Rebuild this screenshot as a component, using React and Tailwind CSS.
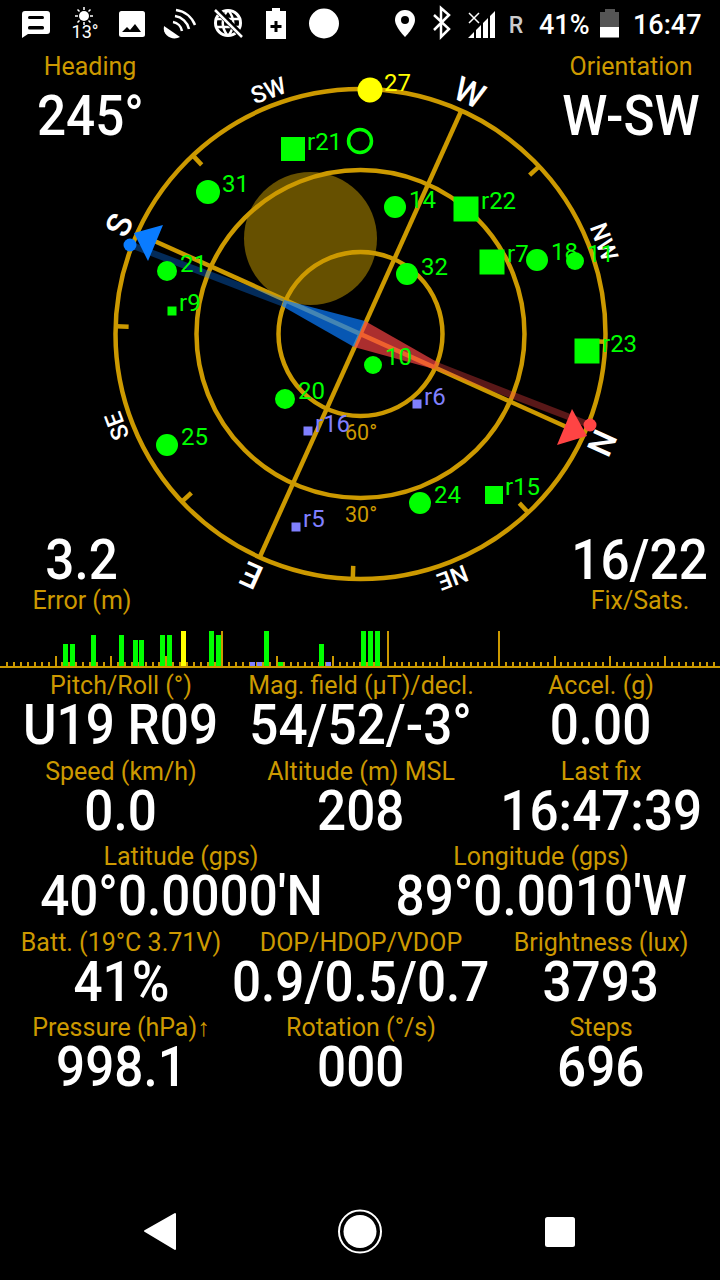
const GOLD = '#cc9900';
const GREEN = '#00ff00';
const PERI = '#8080ff';
const CX = 360.5;
const CY = 334;
const R = 245;

const polar = (az, r) => {
  const a = (az * Math.PI) / 180;
  return [CX + r * Math.sin(a), CY - r * Math.cos(a)];
};

const compassLabels = [
  ['N', 114.3, 265, 34],
  ['NE', 159.3, 260, 24],
  ['E', 204.3, 265, 34],
  ['SE', 249.3, 260, 24],
  ['S', 294.3, 265, 34],
  ['SW', 339.3, 260, 24],
  ['W', 24.3, 265, 34],
  ['NW', 69.3, 260, 24],
];

const azimuthTicks = [136.8, 181.8, 226.8, 271.8, 316.8, 1.8, 46.8, 91.8];
const axes = [114.3, 24.3];

// kind: c = circle, s = square, size is the diameter or the side
const sats = [
  ['27', 'c', 370, 90, 25, '#ffff00', 384, 91],
  ['r21', 's', 293, 149, 24, GREEN, 307, 150],
  ['31', 'c', 208, 192, 24, GREEN, 222, 192],
  ['14', 'c', 395, 207, 22, GREEN, 409, 208],
  ['r22', 's', 466, 209, 25, GREEN, 481, 209],
  ['32', 'c', 407, 274, 22, GREEN, 421, 275],
  ['r7', 's', 492, 262, 25, GREEN, 507, 262],
  ['18', 'c', 537, 260, 22, GREEN, 551, 260],
  ['11', 'c', 575, 261, 18, GREEN, 587, 262],
  ['21', 'c', 167, 271, 20, GREEN, 180, 272],
  ['r9', 's', 172, 311, 9, GREEN, 179, 311],
  ['r23', 's', 587, 351, 25, GREEN, 602, 352],
  ['10', 'c', 373, 365, 18, GREEN, 385, 365],
  ['20', 'c', 285, 399, 20, GREEN, 298, 399],
  ['r6', 's', 417, 404, 9, PERI, 424, 405],
  ['r16', 's', 308, 431, 9, PERI, 315, 432],
  ['25', 'c', 167, 445, 22, GREEN, 181, 445],
  ['24', 'c', 420, 503, 22, GREEN, 434, 503],
  ['r15', 's', 494, 495, 18, GREEN, 505, 495],
  ['r5', 's', 296, 527, 9, PERI, 303, 527],
];

const Compass = () => (
  <svg width="720" height="552" viewBox="0 48 720 552" className="block" style={{ fontFamily: 'Roboto, sans-serif' }}>
    <circle cx="310.5" cy="238.5" r="66.5" fill="#665000" />
    {[R, 164, 82].map((r) => (
      <circle key={r} cx={CX} cy={CY} r={r} fill="none" stroke={GOLD} strokeWidth="4.5" />
    ))}
    {axes.map((az) => {
      const [x1, y1] = polar(az, R);
      const [x2, y2] = polar(az + 180, R);
      return <line key={az} x1={x1} y1={y1} x2={x2} y2={y2} stroke={GOLD} strokeWidth="4.5" />;
    })}
    {azimuthTicks.map((az) => {
      const [x1, y1] = polar(az, R);
      const [x2, y2] = polar(az, R - 13);
      return <line key={az} x1={x1} y1={y1} x2={x2} y2={y2} stroke={GOLD} strokeWidth="4.5" />;
    })}
    {compassLabels.map(([text, az, r, size]) => {
      const [x, y] = polar(az, r);
      return (
        <text
          key={text}
          x={x}
          y={y}
          fill="#fff"
          fontSize={size}
          fontWeight="500"
          textAnchor="middle"
          dominantBaseline="central"
          transform={`rotate(${az} ${x} ${y})`}
        >
          {text}
        </text>
      );
    })}

    {/* needle */}
    <polygon points="365,321 354,347 282,306 284,300" fill="#0a7cff" fillOpacity="0.7" />
    <polygon points="284,299 281,306 130,248 132,242" fill="#0a7cff" fillOpacity="0.35" />
    <polygon points="365,321 354,347 434,369 437,362" fill="#ff4444" fillOpacity="0.67" />
    <polygon points="437,362 434,369 589,428 591,422" fill="#ff4444" fillOpacity="0.35" />
    <polygon points="134,233 163,225 148,261" fill="#0a7cff" />
    <circle cx="130" cy="245" r="6.5" fill="#0a7cff" />
    <polygon points="572,409 587,436 557,445" fill="#ff4444" />
    <circle cx="590" cy="425" r="6.5" fill="#ff4444" />

    <circle cx="360" cy="141" r="11.5" fill="none" stroke={GREEN} strokeWidth="3.5" />
    <text x="345" y="440" fill={GOLD} fontSize="21.5">60°</text>
    <text x="345" y="522" fill={GOLD} fontSize="21.5">30°</text>

    {sats.map(([id, kind, x, y, size, color, tx, ty]) => (
      <g key={id}>
        {kind === 'c' ? (
          <circle cx={x} cy={y} r={size / 2} fill={color} />
        ) : (
          <rect x={x - size / 2} y={y - size / 2} width={size} height={size} fill={color} />
        )}
        <text x={tx} y={ty} fill={color} fontSize="24">{id}</text>
      </g>
    ))}
  </svg>
);

const bars = [
  [63, 644, GREEN], [70, 644, GREEN], [91, 635, GREEN], [119, 635, GREEN], [133, 640, GREEN], [139, 640, GREEN],
  [160, 635, GREEN], [167, 635, GREEN], [181, 631, '#ffff00'], [209, 631, GREEN], [216, 635, GREEN],
  [250, 662, PERI], [257, 662, PERI], [264, 631, GREEN], [278, 662, GREEN], [319, 644, GREEN], [326, 662, PERI],
  [361, 631, GREEN], [368, 631, GREEN], [375, 631, GREEN],
];

const SignalChart = () => {
  const ticks = [];
  for (let i = 1; i <= 104; i++) {
    const x = Math.floor(i * 6.93 - 0.4);
    const major = i % 8 === 0;
    const tall = i === 32 || i === 56 || i === 72;
    ticks.push(<rect key={i} x={x} y={tall ? 631 : major ? 656 : 662} width="2" height={tall ? 36 : major ? 11 : 5} fill={GOLD} />);
  }
  return (
    <svg width="720" height="70" viewBox="0 600 720 70" className="block">
      {ticks}
      {bars.map(([x, y, color]) => (
        <rect key={x} x={x} y={y} width="5" height={666 - y} fill={color} />
      ))}
      <rect x="0" y="666" width="720" height="2" fill={GOLD} />
    </svg>
  );
};

const Stat = ({ label, value }) => (
  <div className="flex flex-col items-center whitespace-nowrap translate-x-[1px]">
    <div className="text-[25px] leading-[30px] text-[#cc9900]">{label}</div>
    <div className="text-[56px] leading-[55px] font-medium text-white -mt-[3px] scale-x-[0.915]">{value}</div>
  </div>
);

const rows = [
  [['Pitch/Roll (°)', 'U19 R09'], ['Mag. field (µT)/decl.', '54/52/-3°'], ['Accel. (g)', '0.00']],
  [['Speed (km/h)', '0.0'], ['Altitude (m) MSL', '208'], ['Last fix', '16:47:39']],
  [['Latitude (gps)', '40°0.0000\'N'], ['Longitude (gps)', '89°0.0010\'W']],
  [['Batt. (19°C 3.71V)', '41%'], ['DOP/HDOP/VDOP', '0.9/0.5/0.7'], ['Brightness (lux)', '3793']],
  [['Pressure (hPa)↑', '998.1'], ['Rotation (°/s)', '000'], ['Steps', '696']],
];

const StatusBar = () => (
  <div className="h-12 relative text-white">
    <svg width="720" height="48" viewBox="0 0 720 48" className="absolute left-0 top-0">
      {/* message */}
      <path d="M25 11h22a3 3 0 0 1 3 3v17a3 3 0 0 1-3 3H28l-6 4V14a3 3 0 0 1 3-3z" fill="#fff" />
      <rect x="28" y="16" width="16" height="3" rx="1.500" fill="#000" />
      <rect x="28" y="26" width="16" height="3.500" rx="1.500" fill="#000" />
      {/* sun */}
      <circle cx="84" cy="16" r="5" fill="#fff" />
      <path d="M84 7v3M84 22v3M75 16h3M90 16h3M77.500 9.500l2 2M88.500 20.500l2 2M77.500 22.500l2-2M88.500 11.500l2-2" stroke="#fff" strokeWidth="1.500" />
      {/* image */}
      <rect x="119" y="11" width="26" height="26" rx="2.500" fill="#fff" />
      <path d="M122 32l5-5 3 3 5-6 6 8z" fill="#000" />
      {/* dish and waves */}
      <path d="M164 26l16 11c-7 4-18-1-16-11z" fill="#fff" />
      <path d="M173 22a11 11 0 0 1 9 9M175 16a17 17 0 0 1 14 13M176 10a24 24 0 0 1 19 15" fill="none" stroke="#fff" strokeWidth="2.500" />
      {/* crossed globe */}
      <circle cx="228" cy="23" r="12.500" fill="none" stroke="#fff" strokeWidth="3" />
      <path d="M216 19h24M216 27h24M228 10c-7 8-7 18 0 26M228 10c7 8 7 18 0 26" fill="none" stroke="#fff" strokeWidth="2.500" />
      <path d="M216 9l26 27" stroke="#000" strokeWidth="6" />
      <path d="M215 10l27 27" stroke="#fff" strokeWidth="2.500" />
      {/* charging battery */}
      <path d="M272 8h8v3h6v28h-20V11h6z" fill="#fff" />
      <path d="M274.500 21h3v4h4v3h-4v4h-3v-4h-4v-3h4z" fill="#000" />
      <circle cx="324" cy="23.500" r="15" fill="#fff" />
      {/* pin */}
      <path d="M405 10c-6 0-10 4.500-10 10 0 7 10 17 10 17s10-10 10-17c0-5.500-4-10-10-10z" fill="#fff" />
      <circle cx="405" cy="20" r="4" fill="#000" />
      {/* bluetooth */}
      <path d="M434 15l15 14-8 8V8l8 7-15 15" fill="none" stroke="#fff" strokeWidth="2.500" />
      {/* signal */}
      <path d="M495 11v27h-5V16zM488 18v20h-5V23zM481 25v13h-5v-8zM474 32v6h-6z" fill="#fff" />
      <path d="M469 13l10 10M479 13l-10 10" stroke="#fff" strokeWidth="1.500" />
      {/* battery level */}
      <path d="M605 9h10v3h4v15h-19V12h5z" fill="#555" />
      <rect x="600" y="27" width="19" height="10.500" fill="#fff" />
      <text x="85" y="38" fill="#fff" fontSize="18" textAnchor="middle" style={{ fontFamily: 'Roboto, sans-serif' }}>13°</text>
      <text x="516" y="33" fill="#ccc" fontSize="23" fontWeight="500" textAnchor="middle" style={{ fontFamily: 'Roboto, sans-serif' }}>R</text>
    </svg>
    <div className="absolute left-[539px] top-[7px] text-[27px] leading-[36px] font-medium">41%</div>
    <div className="absolute left-[633px] top-[7px] text-[27px] leading-[36px] font-medium">16:47</div>
  </div>
);

const CornerStat = ({ className, label, value, reverse }) => (
  <div className={`absolute flex ${reverse ? 'flex-col-reverse' : 'flex-col'} items-center whitespace-nowrap ${className}`}>
    <div className="text-[25px] leading-[30px] text-[#cc9900]">{label}</div>
    <div className={`text-[56px] leading-[58px] font-medium text-white scale-x-[0.915] ${reverse ? '-mb-[3px]' : 'mt-[5px]'}`}>{value}</div>
  </div>
);

export default function App() {
  return (
    <div className="w-[720px] h-[1280px] bg-black overflow-hidden flex flex-col" style={{ fontFamily: 'Roboto, sans-serif' }}>
      <StatusBar />
      <div className="relative h-[552px]">
        <Compass />
        <CornerStat className="left-[10px] w-[160px] top-[4px]" label="Heading" value="245°" />
        <CornerStat className="left-[551px] w-[160px] top-[4px]" label="Orientation" value="W-SW" />
        <CornerStat className="left-[2px] w-[160px] top-[483px]" label="Error (m)" value="3.2" reverse />
        <CornerStat className="left-[560px] w-[160px] top-[483px]" label="Fix/Sats." value="16/22" reverse />
      </div>
      <SignalChart />
      <div className="flex flex-col pt-[1px]">
        {rows.map((row, i) => (
          <div key={i} className={`grid h-[85.5px] ${row.length === 3 ? 'grid-cols-3' : 'grid-cols-2'}`}>
            {row.map(([label, value]) => (
              <Stat key={label} label={label} value={value} />
            ))}
          </div>
        ))}
      </div>
      <div className="mt-auto h-24">
        <svg width="720" height="96" viewBox="0 1184 720 96" className="block">
          <path d="M175 1214v35l-30-18z" fill="#fff" stroke="#fff" strokeWidth="2" strokeLinejoin="round" />
          <circle cx="360" cy="1231.500" r="21" fill="none" stroke="#fff" strokeWidth="2" />
          <circle cx="360" cy="1231.500" r="16.500" fill="#fff" />
          <rect x="545" y="1217" width="30" height="30" rx="2.500" fill="#fff" />
        </svg>
      </div>
    </div>
  );
}
